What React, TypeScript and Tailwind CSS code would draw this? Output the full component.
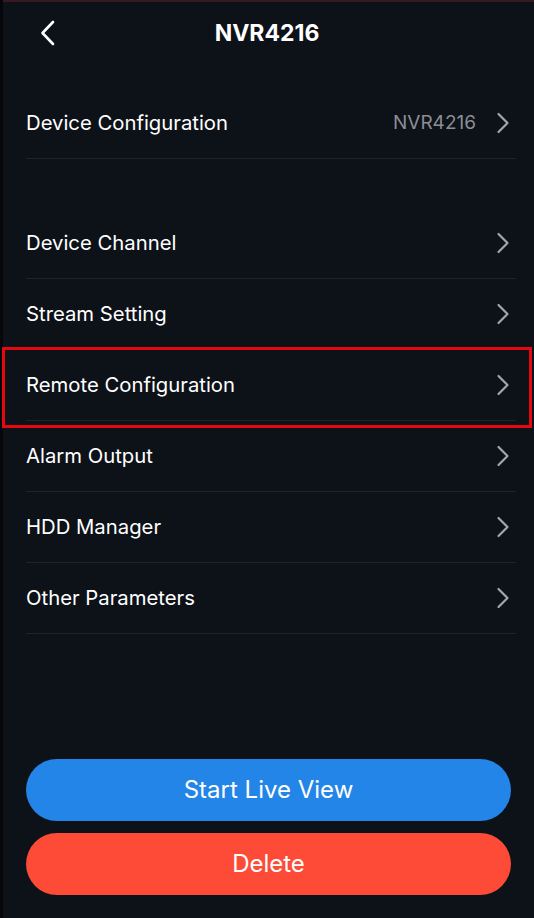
import React from "react";

const Chevron = () => (
  <svg width="14" height="22" viewBox="0 0 14 22" fill="none" className="shrink-0">
    <path d="M2.5 2 L11.5 11 L2.5 20" stroke="#a3a6ac" strokeWidth="2.2" strokeLinecap="round" strokeLinejoin="round" />
  </svg>
);

const Row = ({ label, value }: { label: string; value?: string }) => (
  <div className="flex h-[71px] items-center justify-between border-b border-[#1f222a]">
    <span className="text-[20.3px] text-white">{label}</span>
    <div className="flex items-center gap-[20px] pr-[6px]">
      {value && <span className="text-[19px] text-[#8b8e94]">{value}</span>}
      <Chevron />
    </div>
  </div>
);

export default function App() {
  return (
    <div
      className="relative flex h-[918px] w-[534px] flex-col overflow-hidden bg-[#0d1118]"
      style={{ fontFamily: "Inter, 'Noto Sans', sans-serif" }}
    >
      <div className="absolute left-0 top-0 h-full w-[3px] bg-[#06070a]" />
      <div className="h-[2px] w-full bg-[#3a1822]" />
      <div className="relative flex h-[62px] items-center justify-center">
        <svg width="16" height="26" viewBox="0 0 16 26" fill="none" className="absolute left-[40px] top-[18px]">
          <path d="M13 2 L2.5 13 L13 24" stroke="white" strokeWidth="2.6" strokeLinecap="round" strokeLinejoin="round" />
        </svg>
        <span className="text-[23px] font-bold text-white">NVR4216</span>
      </div>
      <div className="mt-[24px] pl-[26px] pr-[18px]">
        <Row label="Device Configuration" value="NVR4216" />
      </div>
      <div className="mt-[49px] pl-[26px] pr-[18px]">
        <Row label="Device Channel" />
        <Row label="Stream Setting" />
        <Row label="Remote Configuration" />
        <Row label="Alarm Output" />
        <Row label="HDD Manager" />
        <Row label="Other Parameters" />
      </div>
      <div className="mt-auto mb-[23px] flex flex-col gap-[12px] px-[26px] pr-[23px]">
        <button className="h-[62px] rounded-full bg-[#2385e8] text-[24px] text-white">Start Live View</button>
        <button className="h-[62px] rounded-full bg-[#fd4b37] text-[24px] text-white">Delete</button>
      </div>
      <div className="pointer-events-none absolute left-[2px] top-[347px] h-[81px] w-[530px] border-[3px] border-[#e5080f]" />
    </div>
  );
}
